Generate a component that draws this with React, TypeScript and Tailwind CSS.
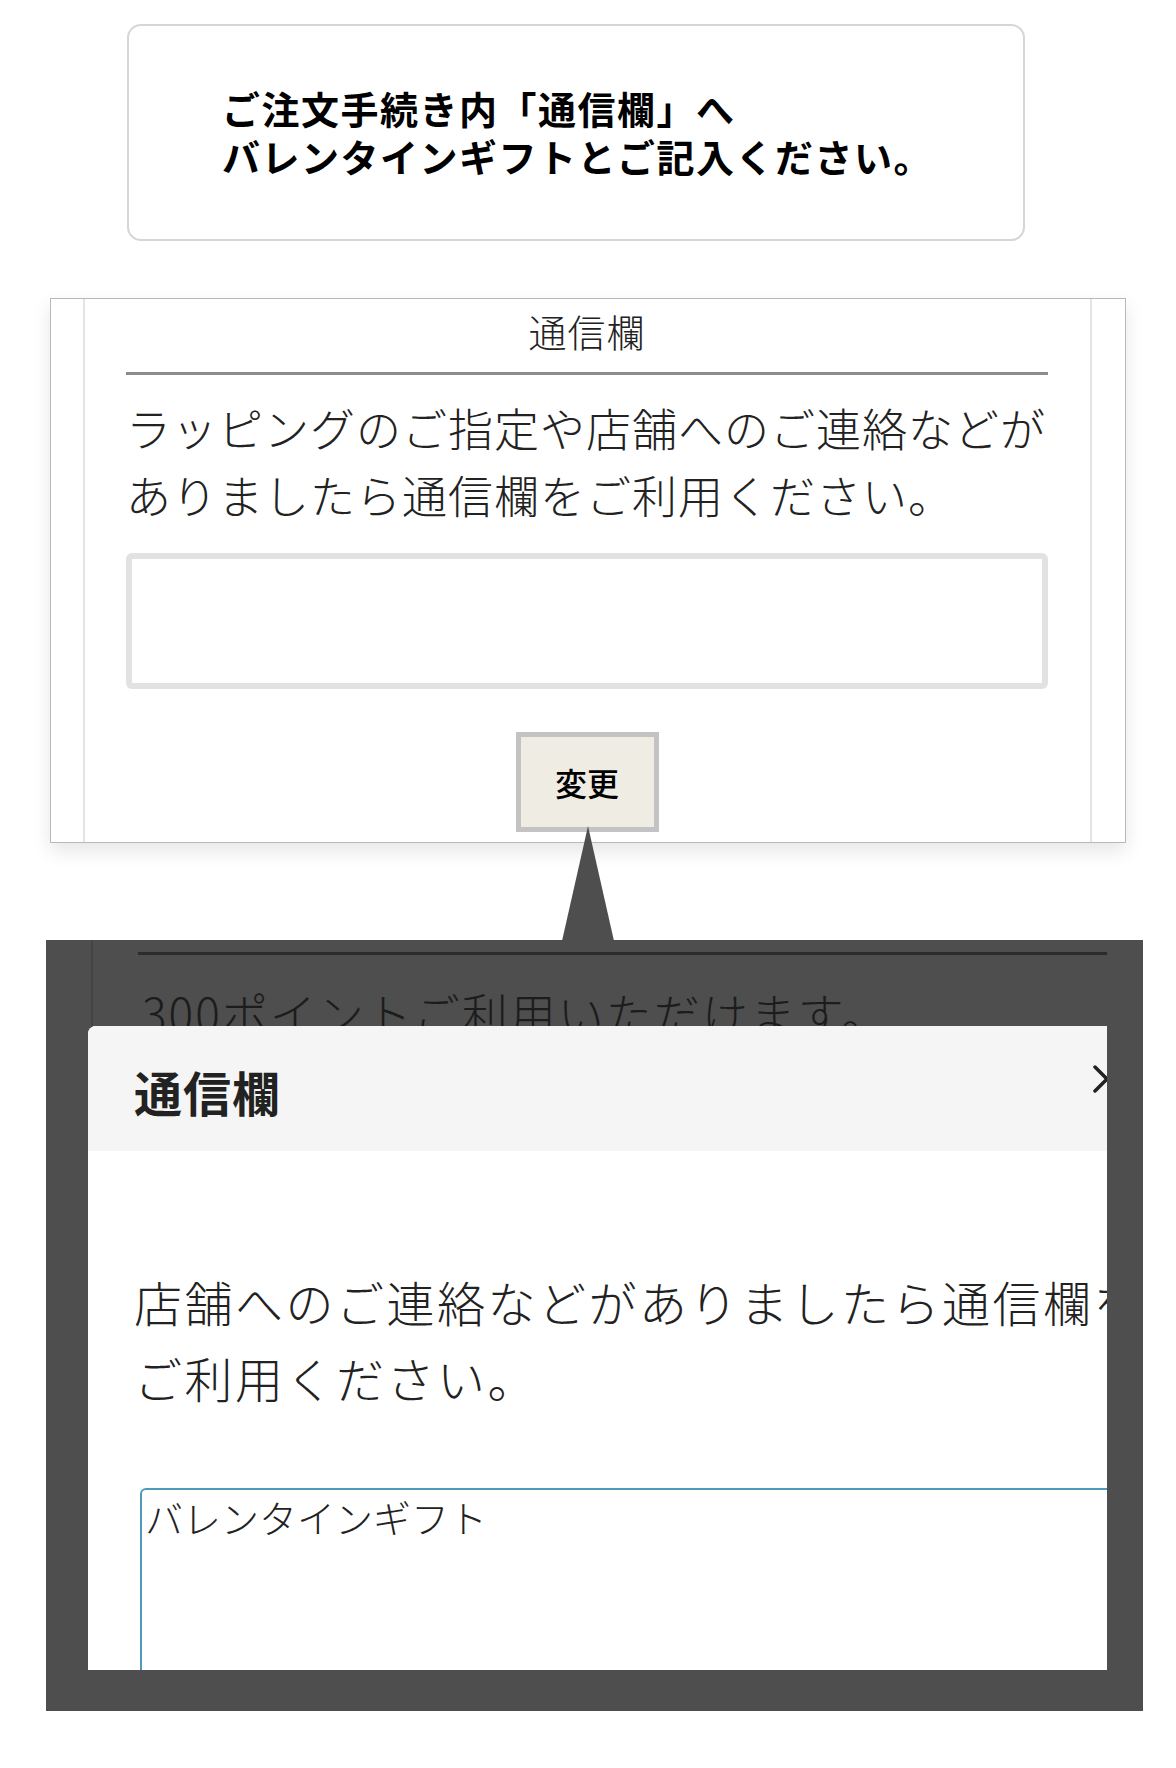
import React from "react";

export default function App() {
  return (
    <div className="relative w-[1176px] h-[1768px] bg-white font-['Noto_Sans_CJK_JP','Noto_Sans',sans-serif] overflow-hidden">
      {/* Top instruction box */}
      <div className="ml-[127px] mt-[24px] w-[898px] h-[217px] border-2 border-[#d6d6d6] rounded-[14px] flex items-center pl-[93px] pb-[2px]">
        <p className="text-[38px] leading-[48px] font-bold text-black tracking-[1.5px]">
          ご注文手続き内「通信欄」へ
          <br />
          バレンタインギフトとご記入ください。
        </p>
      </div>

      {/* Order form card */}
      <div className="ml-[50px] mt-[57px] w-[1076px] h-[545px] border border-[#b9b9b9] bg-white shadow-[0_8px_18px_rgba(0,0,0,0.10)]">
        <div className="ml-[32px] w-[1009px] h-full border-x-2 border-[#e4e4e4] pl-[41px] pr-[42px] flex flex-col">
          <div className="h-[73px] flex items-center justify-center pb-[10px] text-[38px] font-light text-[#222] tracking-[1px]">
            通信欄
          </div>
          <div className="h-[3px] bg-[#8c8c8c]" />
          <p className="mt-[19px] text-[45px] leading-[67px] font-light text-[#222] tracking-[1px] whitespace-nowrap">
            ラッピングのご指定や店舗へのご連絡などが
            <br />
            ありましたら通信欄をご利用ください。
          </p>
          <div className="mt-[25px] h-[136px] border-[6px] border-[#e2e2e2] rounded-[6px] bg-white" />
          <div className="mt-[43px] flex justify-center">
            <div className="w-[143px] h-[100px] border-[5px] border-[#c3c3c3] bg-[#efece4] flex items-center justify-center text-[32px] font-medium text-black">
              変更
            </div>
          </div>
        </div>
      </div>

      {/* Pointer triangle */}
      <svg className="absolute left-[562px] top-[826px]" width="52" height="115" viewBox="0 0 52 115">
        <polygon points="26,0 0,115 52,115" fill="#4e4e4e" />
      </svg>

      {/* Dark screenshot panel */}
      <div className="ml-[46px] mt-[97px] w-[1097px] h-[771px] bg-[#4e4e4e] pr-[36px] pb-[41px]">
        <div className="relative w-full h-full overflow-hidden">
          {/* dimmed background page */}
          <div className="absolute left-[45px] top-0 w-[2px] h-full bg-[#444444]" />
          <div className="absolute left-[92px] right-0 top-[12px] h-[3px] bg-[#2c2c2c]" />
          <div className="absolute left-[96px] top-[42px] text-[46px] leading-[60px] font-light text-[#1c1c1c] tracking-[2px] whitespace-nowrap">
            300ポイントご利用いただけます。
          </div>

          {/* Modal */}
          <div className="absolute left-[42px] top-[86px] w-[1120px] h-[800px] bg-white rounded-t-[8px] overflow-hidden">
            <div className="relative h-[125px] bg-[#f5f5f5] flex items-center pl-[46px] pt-[4px]">
              <span className="text-[48px] font-bold text-[#222] tracking-[1px]">通信欄</span>
              <svg className="absolute left-[1005px] top-[39px]" width="28" height="28" viewBox="0 0 28 28">
                <path d="M2 2 L26 26 M2 26 L26 2" stroke="#222" strokeWidth="3.5" strokeLinecap="round" fill="none" />
              </svg>
            </div>
            <p className="pt-[112px] pl-[46px] text-[48px] leading-[76px] text-[#222] font-light tracking-[2.5px] whitespace-nowrap">
              店舗へのご連絡などがありましたら通信欄を
              <br />
              ご利用ください。
            </p>
            <div className="ml-[52px] mt-[73px] h-[400px] border-2 border-[#4d9bb8] rounded-tl-[6px] pl-[3px] pt-[2px]">
              <span className="text-[38px] leading-[50px] text-[#222] font-light">バレンタインギフト</span>
            </div>
          </div>
        </div>
      </div>
    </div>
  );
}
